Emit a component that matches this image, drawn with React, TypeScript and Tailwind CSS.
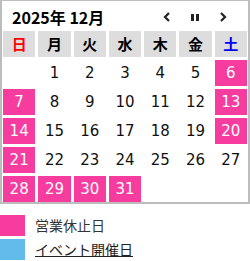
import React from "react";

const days = ["日", "月", "火", "水", "木", "金", "土"];

// 0 = blank, negative = closed day (pink)
const cells: number[] = [
  0, 1, 2, 3, 4, 5, -6,
  -7, 8, 9, 10, 11, 12, -13,
  -14, 15, 16, 17, 18, 19, -20,
  -21, 22, 23, 24, 25, 26, 27,
  -28, -29, -30, -31, 0, 0, 0,
];

const App = () => {
  return (
    <div className="w-[250px] h-[261px] bg-white overflow-hidden" style={{ fontFamily: '"DejaVu Sans", "Noto Sans CJK JP", sans-serif' }}>
      {/* CALENDAR */}
      <div className="border-t border-x-2 border-b-2 border-[#bdbdbd] px-px">
        <div className="h-[30px] flex items-center justify-between pl-[9px]">
          <span className="font-bold text-[16px] text-black leading-none pt-[2px]" style={{ fontFamily: '"Noto Sans CJK JP", sans-serif' }}>
            2025年 12月
          </span>
          <div className="flex items-center mr-[20px] gap-[20px] pt-[2px]">
            <svg width="8" height="10" viewBox="0 0 8 10">
              <path d="M6 1 L2 5 L6 9" stroke="#222" strokeWidth="2.2" fill="none" />
            </svg>
            <svg width="8" height="8" viewBox="0 0 8 8">
              <rect x="0" y="1" width="3" height="7" fill="#222" />
              <rect x="5" y="1" width="3" height="7" fill="#222" />
            </svg>
            <svg width="8" height="10" viewBox="0 0 8 10">
              <path d="M2 1 L6 5 L2 9" stroke="#222" strokeWidth="2.2" fill="none" />
            </svg>
          </div>
        </div>
        <div className="grid grid-cols-7 gap-[3px]">
          {days.map((d, i) => (
            <div
              key={d}
              className={`h-[26px] bg-[#dddddd] flex items-center justify-center text-[15px] font-bold ${i === 0 ? "text-[#ff0000]" : i === 6 ? "text-[#0000ff]" : "text-black"}`}
              style={{ fontFamily: '"Noto Sans CJK JP", sans-serif' }}
            >
              {d}
            </div>
          ))}
          {cells.map((n, i) => (
            <div
              key={i}
              className={`h-[26px] flex items-center justify-center text-[15px] ${n < 0 ? "bg-[#f73ca0] text-white" : "text-[#111]"}`}
            >
              {n === 0 ? "" : Math.abs(n)}
            </div>
          ))}
        </div>
      </div>
      {/* LEGEND */}
      <div className="mt-[11px] flex flex-col gap-[3px] text-[14px]" style={{ fontFamily: '"Noto Sans CJK JP", sans-serif' }}>
        <div className="flex items-center gap-[10px]">
          <span className="w-[25px] h-[21px] bg-[#f73ca0]" />
          <span className="text-[#333]">営業休止日</span>
        </div>
        <div className="flex items-center gap-[10px]">
          <span className="w-[25px] h-[21px] bg-[#62bbea]" />
          <span className="text-[#222] underline">イベント開催日</span>
        </div>
      </div>
    </div>
  );
};

export default App;
